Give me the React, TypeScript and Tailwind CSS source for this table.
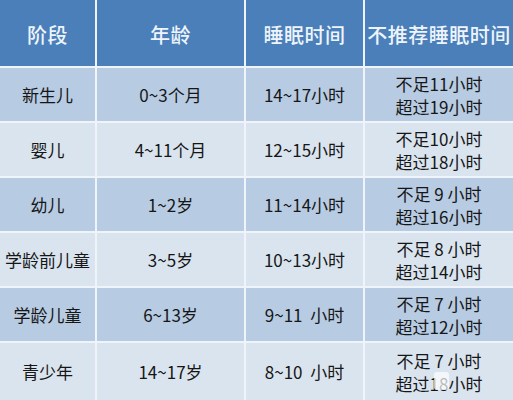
const HEAD = ["阶段", "年龄", "睡眠时间", "不推荐睡眠时间"];

const ROWS = [
  { stage: "新生儿", age: "0~3个月", sleep: "14~17小时", no: ["不足11小时", "超过19小时"] },
  { stage: "婴儿", age: "4~11个月", sleep: "12~15小时", no: ["不足10小时", "超过18小时"] },
  { stage: "幼儿", age: "1~2岁", sleep: "11~14小时", no: ["不足 9 小时", "超过16小时"] },
  { stage: "学龄前儿童", age: "3~5岁", sleep: "10~13小时", no: ["不足 8 小时", "超过14小时"] },
  { stage: "学龄儿童", age: "6~13岁", sleep: "9~11  小时", no: ["不足 7 小时", "超过12小时"] },
  { stage: "青少年", age: "14~17岁", sleep: "8~10  小时", no: ["不足 7 小时", "超过18小时"] },
];

export default function App() {
  return (
    <div
      className="relative h-[400px] w-[513px] overflow-hidden bg-[#eef3f8]"
      style={{ fontFamily: '"Noto Sans CJK SC", "Noto Sans", sans-serif' }}
    >
      <div className="grid h-full grid-cols-[95px_147px_117px_1fr] grid-rows-[66px_repeat(5,53px)_1fr] gap-[2px] bg-[#eef4f9]">
        {HEAD.map((h) => (
          <div
            key={h}
            className="flex items-center justify-center bg-[#4a7fb9] pt-1 text-[20px] font-medium tracking-[0.5px] text-[#eef4fb]"
          >
            {h}
          </div>
        ))}
        {ROWS.map((r, i) => {
          const bg = i % 2 === 0 ? "bg-[#b7cbe2]" : "bg-[#d9e4ee]";
          return [
            <div key={`${i}a`} className={`flex items-center justify-center ${bg} text-[17px] text-[#161616]`}>
              {r.stage}
            </div>,
            <div key={`${i}b`} className={`flex items-center justify-center ${bg} text-[17px] text-[#161616]`}>
              {r.age}
            </div>,
            <div key={`${i}c`} className={`flex items-center justify-center whitespace-pre ${bg} text-[17px] text-[#161616]`}>
              {r.sleep}
            </div>,
            <div
              key={`${i}d`}
              className={`flex flex-col items-center justify-center whitespace-pre ${bg} text-[17px] leading-[23px] text-[#161616]`}
            >
              <span>{r.no[0]}</span>
              <span>{r.no[1]}</span>
            </div>,
          ];
        })}
      </div>
      {/* faint watermark */}
      <div className="absolute left-[434px] top-[372px] h-[18px] w-[15px] rounded-[3px] bg-white/70" />
    </div>
  );
}
